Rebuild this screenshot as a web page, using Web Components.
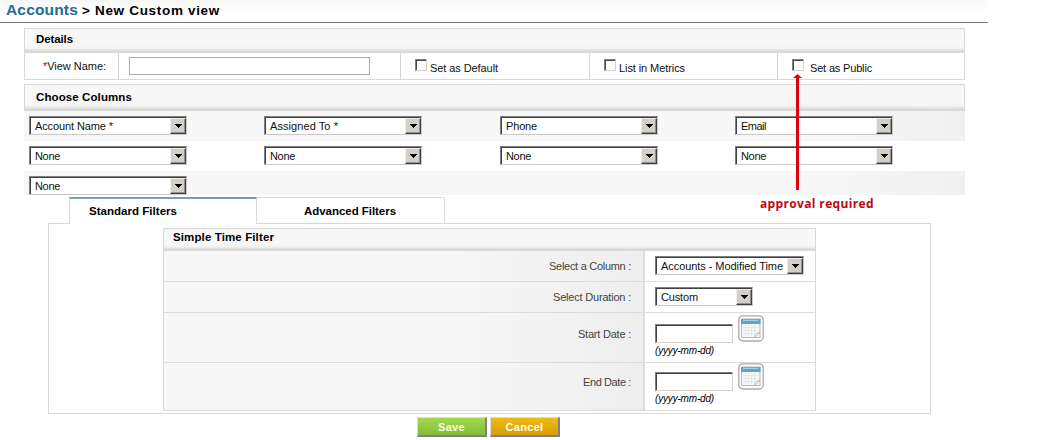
<!DOCTYPE html>
<html lang="en">
<head>
<meta charset="utf-8">
<title>Accounts - New Custom view</title>
<style>
body{
    margin:0;
    background:#fff;
    font-family:"Liberation Sans", Arial, sans-serif;
    font-size:11px;
    line-height:12px;
    color:#111;
}
</style>
</head>
<body>
<custom-view-page></custom-view-page>

<script>
function define(name, html, Base = HTMLElement){
    const tpl = document.createElement('template');
    tpl.innerHTML = html;
    customElements.define(name, class extends Base{
        constructor(){
            super();
            this.attachShadow({mode:"open"});
            this.shadowRoot.appendChild(tpl.content.cloneNode(true));
        }
    });
}

// text set to a given width by its letter spacing
class FitText extends HTMLElement{
    connectedCallback(){
        const w = parseFloat(this.getAttribute('w'));
        const span = this.shadowRoot.querySelector('span');
        const natural = span.getBoundingClientRect().width;
        if(w && natural){
            span.style.letterSpacing = (w - natural) / this.textContent.length + 'px';
        }
    }
}
define('fit-text', `
<style>
:host{display:inline-block; white-space:nowrap;}
</style>
<span><slot></slot></span>`, FitText);

define('check-box', `
<style>
:host{display:flex;}
.box{
    box-sizing:border-box;
    width:12px;
    height:12px;
    background:#fff;
    border:1px solid #d4d0c8;
    border-top-color:#808080;
    border-left-color:#808080;
    box-shadow:inset 1px 1px #484848;
}
.text{margin:3px 0 0 var(--gap, 3px);}
</style>
<div class="box"></div><div class="text"><slot></slot></div>`);

define('select-box', `
<style>
:host{
    display:flex;
    box-sizing:border-box;
    width:158px;
    height:19px;
    padding:1px 0 0 1px;
    background:#fff;
    border:1px solid #c9c9c9;
    border-top-color:#808080;
    border-left-color:#808080;
    box-shadow:inset 1px 1px #404040;
}
.text{flex:1; padding:2px 0 0 4px; color:#111;}
.btn{
    box-sizing:border-box;
    width:16px;
    height:16px;
    display:flex;
    align-items:center;
    justify-content:center;
    background:#d4d0c8;
    border:1px solid #eee;
    border-right-color:#404040;
    border-bottom-color:#404040;
    box-shadow:inset -1px -1px #909090;
}
svg{display:block;}
</style>
<div class="text"><slot></slot></div>
<div class="btn"><svg width="7" height="4" shape-rendering="crispEdges"><path d="M0 0h7L3.5 4z" fill="#000"/></svg></div>`);

define('panel-head', `
<style>
:host{
    display:block;
    box-sizing:border-box;
    height:24px;
    padding:4px 0 0 11px;
    font-weight:bold;
    font-size:11.5px;
    color:#000;
    background:linear-gradient(#f7f7f7 0 70%, #f1f1ef 82%, #d8d8d6 92%, #d8d8d6);
}
</style>
<slot></slot>`);

define('details-panel', `
<style>
:host{
    display:block;
    box-sizing:border-box;
    width:941px;
    height:52px;
    border:1px solid #d9d9d9;
}
.row{display:flex; height:26px;}
.row > div{box-sizing:border-box; border-right:1px solid #d6d6d6;}
.row > div:last-child{border:0;}
.name{width:94px; padding:7px 0 0 18px;}
.name i{color:#b00000; font-style:normal;}
.field{width:282px; padding:4px 0 0 10px;}
.input{box-sizing:border-box; width:241px; height:18px; border:1px solid #aaa;}
.c1{width:189px; padding:6px 0 0 14px;}
.c2{width:188px; padding:6px 0 0 14px;}
.c3{flex:1; padding:6px 0 0 14px;}
.c3 check-box{--gap:6px;}
</style>
<panel-head><fit-text w="37">Details</fit-text></panel-head>
<div class="row">
    <div class="name"><fit-text w="63"><i>*</i>View Name:</fit-text></div>
    <div class="field"><div class="input"></div></div>
    <div class="c1"><check-box><fit-text w="68">Set as Default</fit-text></check-box></div>
    <div class="c2"><check-box><fit-text w="66">List in Metrics</fit-text></check-box></div>
    <div class="c3"><check-box><fit-text w="62">Set as Public</fit-text></check-box></div>
</div>`);

define('columns-panel', `
<style>
:host{display:block; width:941px;}
panel-head{
    height:27px;
    padding-top:6px;
    border:1px solid #d9d9d9;
    border-bottom:0;
}
.row{
    display:grid;
    grid-template-columns:235px 236px 235px 235px;
    box-sizing:border-box;
    height:30px;
    padding:5px 0 0 5px;
}
.odd{background:linear-gradient(90deg, #f7f7f7 0 85%, #f0f0f0);}
.last{height:24px;}
</style>
<panel-head><fit-text w="96">Choose Columns</fit-text></panel-head>
<div class="row odd">
    <select-box><fit-text w="78">Account Name *</fit-text></select-box>
    <select-box><fit-text w="68">Assigned To *</fit-text></select-box>
    <select-box><fit-text w="31">Phone</fit-text></select-box>
    <select-box><fit-text w="25">Email</fit-text></select-box>
</div>
<div class="row">
    <select-box><fit-text w="25">None</fit-text></select-box>
    <select-box><fit-text w="25">None</fit-text></select-box>
    <select-box><fit-text w="25">None</fit-text></select-box>
    <select-box><fit-text w="25">None</fit-text></select-box>
</div>
<div class="row odd last">
    <select-box><fit-text w="25">None</fit-text></select-box>
</div>`);

define('filter-tabs', `
<style>
:host{display:flex; font-weight:bold; font-size:11.5px; color:#000;}
div{
    box-sizing:border-box;
    height:27px;
    background:#fff;
    border:1px solid #d9d9d9;
    border-left:0;
}
.on{
    width:188px;
    padding:6px 0 0 19px;
    border-left:1px solid #d9d9d9;
    border-top:2px solid #7c9cbf;
    border-bottom:0;
}
.off{width:188px; padding:7px 0 0 47px;}
</style>
<div class="on"><fit-text w="88">Standard Filters</fit-text></div>
<div class="off"><fit-text w="92">Advanced Filters</fit-text></div>`);

define('form-row', `
<style>
:host{display:flex; box-sizing:border-box; border-bottom:1px solid #dcdcdc;}
.label{
    box-sizing:border-box;
    width:481px;
    padding:var(--top, 9px) 12px 0 0;
    text-align:right;
    color:#444;
    background:linear-gradient(90deg, #f7f7f7 0 60%, #eeeeee);
    border-right:2px solid #dedede;
}
.value{flex:1; padding:5px 0 0 10px; background:#fff;}
</style>
<div class="label"><slot name="label"></slot></div>
<div class="value"><slot></slot></div>`);

define('date-field', `
<style>
:host{display:block; margin-top:var(--shift, -3px);}
.line{display:flex; gap:5px; height:28px; align-items:flex-end;}
.input{
    box-sizing:border-box;
    width:78px;
    height:19px;
    border:1px solid #d4d0c8;
    border-top-color:#808080;
    border-left-color:#808080;
    box-shadow:inset 1px 1px #404040;
}
svg{display:block; margin-bottom:1px;}
.hint{font-size:10px; font-style:italic; color:#000; margin-top:2px;}
</style>
<div class="line">
    <div class="input"></div>
    <svg width="26" height="27" viewBox="0 0 26 27">
        <rect x=".8" y=".8" width="24.4" height="25.2" rx="4" fill="#fff" stroke="#aaa" stroke-width="1.3"/>
        <rect x="3.5" y="4" width="18.5" height="18.5" fill="#f7f8fc" stroke="#b8b8bd"/>
        <rect x="3" y="4" width="19.5" height="5" fill="#5fa2d3"/>
        <path d="M5 5.3h15" stroke="#b4daf3"/>
        <path d="M5 12.5h15M5 15.5h15M5 18.5h10M7.5 10v11M10.5 10v11M13.5 10v11M16.5 10v7" stroke="#dfe1ec" stroke-width=".8"/>
        <path d="M22 17l-5 5.5c-.5-2 .5-3 1-4.5 1 .5 2.5 0 4-1z" fill="#fff" stroke="#aeb2bd" stroke-width=".8"/>
    </svg>
</div>
<div class="hint"><fit-text w="59">(yyyy-mm-dd)</fit-text></div>`);

define('time-filter', `
<style>
:host{display:block; box-sizing:border-box; width:653px; border:1px solid #d9d9d9; border-bottom:0;}
panel-head{height:22px; padding:2px 0 0 9px;}
.r1{height:31px; --top:9px;}
.r2{height:31px;}
.r3{height:50px; --top:15px;}
.r4{height:48px; --top:13px; --shift:-5px;}
.w1{width:149px;}
.w2{width:98px;}
</style>
<panel-head><fit-text w="101">Simple Time Filter</fit-text></panel-head>
<form-row class="r1"><fit-text slot="label" w="82">Select a Column :</fit-text><select-box class="w1"><fit-text w="122">Accounts - Modified Time</fit-text></select-box></form-row>
<form-row class="r2"><fit-text slot="label" w="78">Select Duration :</fit-text><select-box class="w2"><fit-text w="37">Custom</fit-text></select-box></form-row>
<form-row class="r3"><fit-text slot="label" w="53">Start Date :</fit-text><date-field></date-field></form-row>
<form-row class="r4"><fit-text slot="label" w="48">End Date :</fit-text><date-field></date-field></form-row>`);

define('push-button', `
<style>
:host{
    display:block;
    box-sizing:border-box;
    width:70px;
    height:20px;
    padding-top:3px;
    text-align:center;
    font-weight:bold;
    color:#ffffe8;
    background:var(--face);
    border:1px solid #ddd;
    border-right:2px solid #808080;
    border-bottom:2px solid #808080;
}
</style>
<slot></slot>`);

// red pointer from the note up to the checkbox
define('callout-note', `
<style>
:host{position:absolute; left:760px; top:74px; color:#c00812;}
svg{display:block; margin-left:33px;}
.text{font:bold 12px/14px "Open Sans", "DejaVu Sans", sans-serif; margin-top:7px;}
</style>
<svg width="9" height="116"><path d="M4.5 0L9 4H0z" fill="#dc0008"/><path d="M3 3h3v113h-3z" fill="#dc0008"/></svg>
<div class="text"><fit-text w="114">approval required</fit-text></div>`);

define('custom-view-page', `
<style>
:host{display:block; position:relative; width:1050px; height:440px; overflow:hidden;}
header{
    display:flex;
    align-items:baseline;
    gap:4px;
    box-sizing:border-box;
    width:988px;
    height:23px;
    padding:1px 0 0 6px;
    font-weight:bold;
    font-size:13.5px;
    line-height:17px;
    color:#000;
    background:linear-gradient(#f8f8f8, #fff 60%);
    border-bottom:1px solid #777;
}
.module{font-size:15.5px; color:#246c98;}
details-panel{margin:5px 0 0 24px;}
columns-panel{margin:4px 0 0 24px;}
filter-tabs{margin:2px 0 0 69px; position:relative; z-index:1;}
.body{
    box-sizing:border-box;
    width:883px;
    height:191px;
    margin:-1px 0 0 48px;
    padding:4px 0 0 114px;
    border:1px solid #d9d9d9;
}
.buttons{display:flex; gap:3px; margin:3px 0 0 417px;}
.save{--face:linear-gradient(#a2d94c, #84bd36);}
.cancel{--face:linear-gradient(#eebb16, #d99c05);}
</style>
<header><fit-text class="module" w="72">Accounts</fit-text><fit-text w="138">&gt; New Custom view</fit-text></header>
<details-panel></details-panel>
<columns-panel></columns-panel>
<filter-tabs></filter-tabs>
<div class="body"><time-filter></time-filter></div>
<div class="buttons">
    <push-button class="save"><fit-text w="27">Save</fit-text></push-button>
    <push-button class="cancel"><fit-text w="38">Cancel</fit-text></push-button>
</div>
<callout-note></callout-note>`);
</script>
</body>
</html>
